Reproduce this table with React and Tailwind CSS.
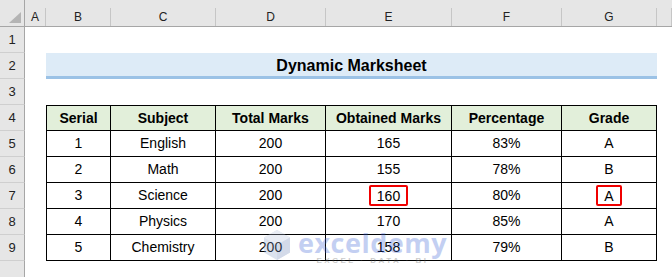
import React from 'react';

const cols = ['A', 'B', 'C', 'D', 'E', 'F', 'G', ''];
const heads = ['Serial', 'Subject', 'Total Marks', 'Obtained Marks', 'Percentage', 'Grade'];
const rows = [
    ['1', 'English', '200', '165', '83%', 'A'],
    ['2', 'Math', '200', '155', '78%', 'B'],
    ['3', 'Science', '200', '160', '80%', 'A'],
    ['4', 'Physics', '200', '170', '85%', 'A'],
    ['5', 'Chemistry', '200', '158', '79%', 'B'],
];

function RowHead({ n }) {
    return (
        <div className="flex items-center justify-center bg-[#e6e6e6] border-r border-r-[#a6a6a6] border-b border-b-[#cfcfcf] text-[13px] text-[#222]">
            {n}
        </div>
    );
}

function Cell({ children, first, top, head, boxed }) {
    return (
        <div
            className={
                'flex items-center justify-center border-r border-b border-black text-[14px] text-black ' +
                (first ? 'border-l ' : '') +
                (top ? 'border-t ' : '') +
                (head ? 'bg-[#e2efda] font-bold' : 'bg-white')
            }
        >
            {boxed ? (
                <span className="inline-flex h-[21px] items-center justify-center rounded-[2px] border-2 border-[#f00000] px-[6px] pt-px">{children}</span>
            ) : (
                children
            )}
        </div>
    );
}

export default function App() {
    return (
        <div className="relative w-[672px] h-[277px] overflow-hidden bg-white" style={{ fontFamily: '"Liberation Sans", Arial, sans-serif' }}>
            <div className="grid grid-cols-[25px_21px_65px_105px_110px_126px_110px_95px_15px] grid-rows-[27px_repeat(9,26px)_16px]">
                {/* column header strip */}
                <div className="relative bg-[#e6e6e6] border-r border-r-[#a6a6a6] border-b border-b-[#a6a6a6]">
                    <div className="absolute right-[3px] bottom-[3px] w-0 h-0 border-l-[12px] border-l-transparent border-b-[11px] border-b-[#b4b4b4]"></div>
                </div>
                {cols.map((c, i) => (
                    <div key={i} className="bg-[#e6e6e6] pt-2 border-b border-b-[#a6a6a6]">
                        <div className="h-full flex items-center justify-center border-r border-r-[#c6c6c6] text-[12px] text-[#222]">{c}</div>
                    </div>
                ))}

                {/* row 1 */}
                <RowHead n={1} />
                <div className="col-span-8"></div>

                {/* row 2: title */}
                <RowHead n={2} />
                <div></div>
                <div className="col-span-6 flex items-center justify-center bg-[#ddebf7] border-b-[3px] border-[#9bc2e6] text-[16px] font-bold text-black pt-[2px]">
                    Dynamic Marksheet
                </div>
                <div></div>

                {/* row 3 */}
                <RowHead n={3} />
                <div className="col-span-8"></div>

                {/* row 4: table header */}
                <RowHead n={4} />
                <div></div>
                {heads.map((h, i) => (
                    <Cell key={h} first={i === 0} top head>{h}</Cell>
                ))}
                <div></div>

                {rows.map((r, ri) => (
                    <React.Fragment key={ri}>
                        <RowHead n={ri + 5} />
                        <div></div>
                        {r.map((v, i) => (
                            <Cell key={i} first={i === 0} boxed={ri === 2 && (i === 3 || i === 5)}>{v}</Cell>
                        ))}
                        <div></div>
                    </React.Fragment>
                ))}

                {/* row 10 (partial) */}
                <div className="bg-[#e6e6e6] border-r border-r-[#a6a6a6]"></div>
                <div className="col-span-8"></div>
            </div>

            {/* watermark */}
            <div className="absolute left-[262px] top-[229px] flex items-start gap-[6px] opacity-30 pointer-events-none">
                <svg width="30" height="32" viewBox="0 0 30 32">
                    <path d="M15 1 L28 8.5 V23.5 L15 31 L2 23.5 V8.5 Z" fill="#8fa3c9" />
                    <path d="M15 1 L28 8.5 L15 16 L2 8.5 Z" fill="#b9c6df" />
                    <path d="M15 16 L28 8.5 V23.5 L15 31 Z" fill="#6f86b8" />
                </svg>
                <div className="flex flex-col items-center leading-none">
                    <span className="text-[27px] font-bold text-[#3b63d6] tracking-[0.5px]" style={{ fontFamily: '"Open Sans", sans-serif' }}>exceldemy</span>
                    <span className="mt-[1px] text-[8px] font-bold text-[#555] tracking-[2.5px]">EXCEL · DATA · BI</span>
                </div>
            </div>
        </div>
    );
}
